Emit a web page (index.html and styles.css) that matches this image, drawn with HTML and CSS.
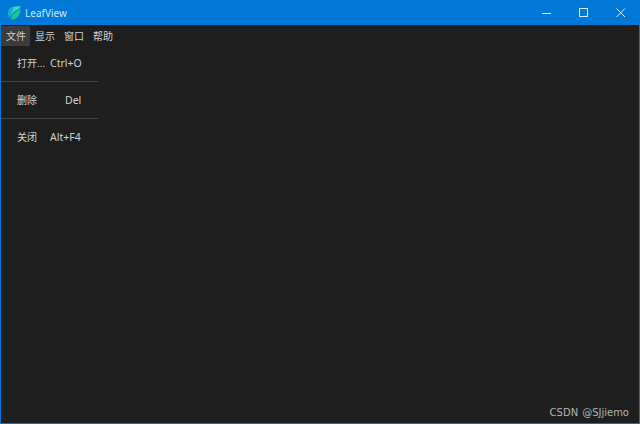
FILE: index.html
```html
<!DOCTYPE html>
<html lang="zh">
<head>
    <meta charset="UTF-8">
    <title>LeafView</title>
    <link rel="stylesheet" href="styles.css">
</head>
<body>
    <div class="window">
        <div class="titlebar">
            <svg class="logo" width="14" height="14" viewBox="0 0 14 14">
                <path d="M1 6 C1.500 3 3 1 6 1 L5 6 L3 12 C1.500 11 0.500 8.500 1 6 Z" fill="#1fa8c8"/>
                <path d="M6 1 C8.500 0 11.500 0 14 0.500 L12 3 L7 6 L4 11 L5 6 Z" fill="#2fd6c0"/>
                <path d="M8 6.500 L13.500 3 C13.500 7 11.500 11.500 7.500 13 C6 13.500 4.500 13.500 3.500 12.500 Z" fill="#22c48e"/>
            </svg>
            <span class="app-name">LeafView</span>
            <div class="window-btns">
                <div class="win-btn">
                    <svg width="12" height="12" viewBox="0 0 12 12"><path d="M1 6.500 H10" stroke="#dcebf8" fill="none"/></svg>
                </div>
                <div class="win-btn">
                    <svg width="12" height="12" viewBox="0 0 12 12"><rect x="1.500" y="1.500" width="8" height="8" stroke="#dcebf8" fill="none"/></svg>
                </div>
                <div class="win-btn">
                    <svg width="12" height="12" viewBox="0 0 12 12"><path d="M1.500 1.500 L10 10 M10 1.500 L1.500 10" stroke="#e8f2fb" fill="none"/></svg>
                </div>
            </div>
        </div>

        <div class="menubar">
            <div class="menu-item active">文件</div>
            <div class="menu-item">显示</div>
            <div class="menu-item">窗口</div>
            <div class="menu-item">帮助</div>
        </div>

        <div class="content">
            <div class="dropdown">
                <div class="drop-row"><span>打开...</span><span class="shortcut">Ctrl+O</span></div>
                <div class="sep"></div>
                <div class="drop-row"><span>删除</span><span class="shortcut del">Del</span></div>
                <div class="sep"></div>
                <div class="drop-row"><span>关闭</span><span class="shortcut">Alt+F4</span></div>
            </div>
            <div class="watermark">CSDN <span class="author">@SJjiemo</span></div>
        </div>
    </div>
</body>
</html>
```

FILE: styles.css
```css
html, body {
    margin: 0;
    padding: 0;
    height: 100%;
    overflow: hidden;
}

body {
    font-family: "Liberation Sans", "Noto Sans CJK SC", sans-serif;
    font-size: 10px;
    color: #d2d2d2;
    background-color: #1e1e1e;
}

.window {
    height: 424px;
    box-sizing: border-box;
    display: flex;
    flex-direction: column;
    border: 1px solid #0078d7;
    border-top: none;
}

.titlebar {
    height: 25px;
    flex-shrink: 0;
    display: flex;
    align-items: center;
    background-color: #0078d7;
    padding-left: 6px;
}

.logo {
    margin-right: 4px;
}

.app-name {
    font-family: "Noto Sans", sans-serif;
    font-size: 10px;
    color: #cfe6f8;
}

.window-btns {
    margin-left: auto;
    display: flex;
}

.win-btn {
    width: 37px;
    height: 25px;
    display: flex;
    align-items: center;
    justify-content: center;
}

.menubar {
    height: 21px;
    flex-shrink: 0;
    display: flex;
    align-items: flex-end;
}

.menu-item {
    height: 20px;
    line-height: 21px;
    padding: 0 4px 0 5px;
}

.menu-item.active {
    background-color: #3c3c3c;
}

.content {
    flex: 1;
    position: relative;
}

.dropdown {
    position: absolute;
    left: 0;
    top: 0;
    width: 97px;
    background-color: #1e1e1e;
}

.drop-row {
    height: 35px;
    box-sizing: border-box;
    display: flex;
    align-items: center;
    padding: 0 0 2px 16px;
}

.shortcut {
    position: absolute;
    left: 49px;
    font-family: "Noto Sans", sans-serif;
    font-size: 10.5px;
}

.shortcut.del {
    left: 64px;
}

.sep {
    height: 1px;
    margin: 0 0 1px;
    background-color: #444444;
}

.watermark {
    position: absolute;
    right: 10px;
    bottom: 5px;
    display: flex;
    gap: 4px;
    font-family: "DejaVu Sans", sans-serif;
    font-size: 10px;
    color: #b4b4b4;
}
```
